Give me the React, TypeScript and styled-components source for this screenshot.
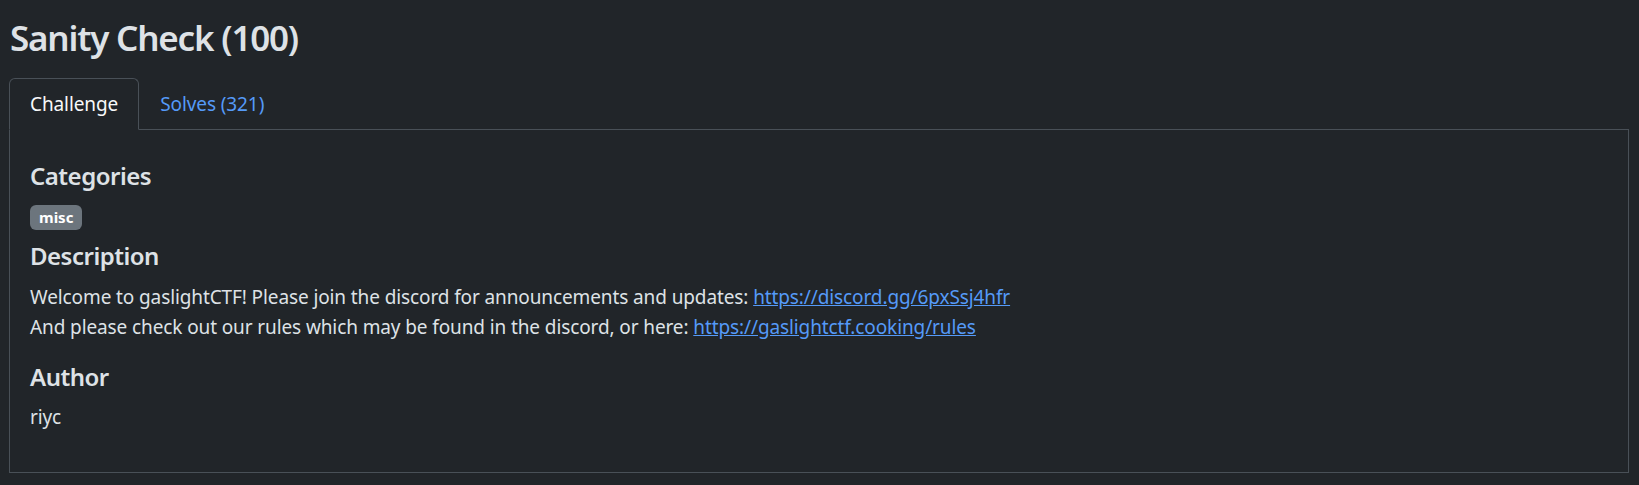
import { useState } from "react";
import styled, { createGlobalStyle } from "styled-components";

const GlobalStyle = createGlobalStyle`
    html, body {
        margin: 0;
        background-color: #212529;
        color: #dee2e6;
        font-family: "Noto Sans", "Open Sans", sans-serif;
        font-size: 20px;
        line-height: 1.5;
    }
    * {
        box-sizing: border-box;
    }
`;

const Page = styled.main`
    padding: 17px 10px 14px 9px;
`;

const Title = styled.h3`
    margin: 0 0 19px 1px;
    font-size: 35px;
    font-weight: 600;
    line-height: 42px;
    letter-spacing: -1.2px;
`;

const TabList = styled.ul`
    display: flex;
    margin: 0;
    padding: 0;
    list-style: none;
    border-bottom: 1px solid #495057;
`;

const TabButton = styled.button<{ $active: boolean }>`
    margin-bottom: -1px;
    padding: 10px 20px;
    font: inherit;
    font-size: 19px;
    line-height: 30px;
    letter-spacing: -0.1px;
    cursor: pointer;
    background: ${(p) => (p.$active ? "#212529" : "transparent")};
    color: ${(p) => (p.$active ? "#f8f9fa" : "#559af8")};
    border: 1px solid ${(p) => (p.$active ? "#495057" : "transparent")};
    border-bottom-color: ${(p) => (p.$active ? "#212529" : "transparent")};
    border-top-left-radius: 6px;
    border-top-right-radius: 6px;
`;

const Panel = styled.section`
    padding: 31px 20px 40px;
    border: 1px solid #495057;
    border-top: none;
`;

// margins collapse with the neighbouring blocks, so gaps are the larger of the two
const Heading = styled.h5<{ $gap?: number }>`
    margin: 0 0 ${(p) => p.$gap ?? 10}px;
    font-size: 24px;
    font-weight: 600;
    line-height: 30px;
    letter-spacing: -0.5px;
`;

const Badges = styled.div`
    display: flex;
    gap: 6px;
    margin: 14px 0 11px;
`;

const Badge = styled.span`
    display: inline-block;
    padding: 5px 9px;
    font-size: 15px;
    font-weight: 700;
    line-height: 15px;
    color: #fff;
    background-color: #6c757d;
    border-radius: 6px;
`;

const Text = styled.p<{ $gap?: number }>`
    margin: 0 0 ${(p) => p.$gap ?? 0}px;
    font-size: 19px;
    line-height: 30px;
    letter-spacing: -0.11px;
`;

const Link = styled.a`
    color: #559af8;
    text-decoration: underline;
`;

const tabs = ["Challenge", "Solves (321)"];

export default function App() {
    const [active, setActive] = useState(0);

    return (
        <>
            <GlobalStyle />
            <Page>
                <Title>Sanity Check (100)</Title>
                <TabList role="tablist">
                    {tabs.map((tab, i) => (
                        <li key={tab}>
                            <TabButton $active={active === i} onClick={() => setActive(i)}>
                                {tab}
                            </TabButton>
                        </li>
                    ))}
                </TabList>
                <Panel>
                    <Heading>Categories</Heading>
                    <Badges>
                        <Badge>misc</Badge>
                    </Badges>
                    <Heading $gap={11}>Description</Heading>
                    <Text $gap={20}>
                        Welcome to gaslightCTF! Please join the discord for announcements and updates:{" "}
                        <Link href="#">https://discord.gg/6pxSsj4hfr</Link>
                        <br />
                        And please check out our rules which may be found in the discord, or here:{" "}
                        <Link href="#">https://gaslightctf.cooking/rules</Link>
                    </Text>
                    <Heading>Author</Heading>
                    <Text>riyc</Text>
                </Panel>
            </Page>
        </>
    );
}
